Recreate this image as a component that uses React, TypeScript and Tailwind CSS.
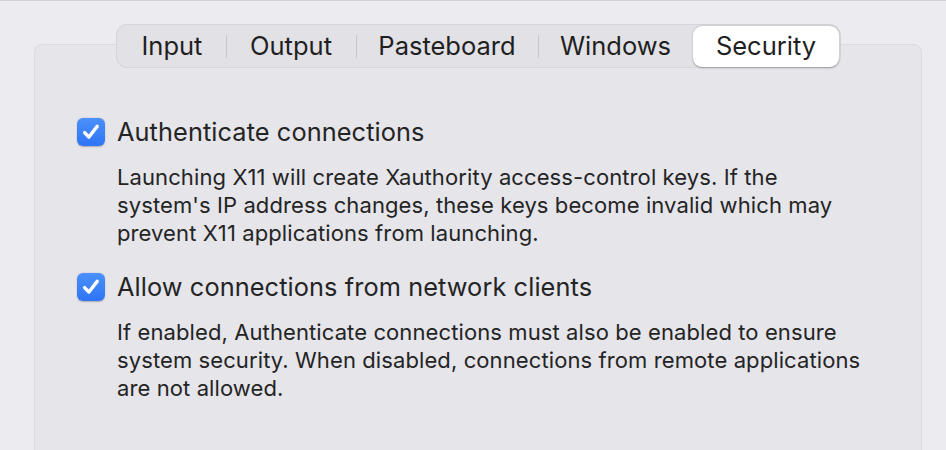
import React from "react";

const tabs = [
  { label: "Input", w: 108 },
  { label: "Output", w: 130 },
  { label: "Pasteboard", w: 182 },
  { label: "Windows", w: 155 },
  { label: "Security", w: 146 },
];

function Check() {
  return (
    <div className="w-[28px] h-[28px] shrink-0 rounded-[6px] bg-gradient-to-b from-[#4b90fa] to-[#2e74f4] shadow-[0_0.5px_1.5px_rgba(0,0,0,0.25)] flex items-center justify-center">
      <svg width="20" height="20" viewBox="0 0 20 20" fill="none">
        <path d="M3.6 10.6 L7.9 15 L16.2 4.4" stroke="white" strokeWidth="3.4" strokeLinecap="round" strokeLinejoin="round" />
      </svg>
    </div>
  );
}

function Option({ title, lines, gapTop }: { title: string; lines: string[]; gapTop: string }) {
  return (
    <div className={gapTop}>
      <div className="flex items-center gap-[12px] h-[30px]">
        <Check />
        <span className="text-[25.3px] leading-[30px] text-[#242424] tracking-[0.1px]">{title}</span>
      </div>
      <div className="ml-[40px] mt-[16px] text-[22px] leading-[28px] text-[#242424] tracking-[0.1px]">
        {lines.map((l, i) => (
          <div key={i} className="whitespace-nowrap">{l}</div>
        ))}
      </div>
    </div>
  );
}

export default function App() {
  return (
    <div
      className="relative w-[946px] h-[450px] overflow-hidden bg-[#ececf0] border-t border-[#d2d2d6]"
      style={{ fontFamily: "Inter, 'Noto Sans', sans-serif" }}
    >
      <div className="ml-[34px] mt-[43px] w-[888px] h-[440px] rounded-[8px] bg-[#e5e5ea] border border-[#dcdce0] pl-[42px] pt-[72px]">
        <Option
          title="Authenticate connections"
          gapTop=""
          lines={[
            "Launching X11 will create Xauthority access-control keys. If the",
            "system's IP address changes, these keys become invalid which may",
            "prevent X11 applications from launching.",
          ]}
        />
        <Option
          title="Allow connections from network clients"
          gapTop="mt-[25px]"
          lines={[
            "If enabled, Authenticate connections must also be enabled to ensure",
            "system security. When disabled, connections from remote applications",
            "are not allowed.",
          ]}
        />
      </div>
      <div className="absolute left-[116px] top-[23px] h-[44px] flex items-center rounded-[11px] bg-[#e1e1e6] border border-[#d6d6da] p-[1px]">
        {tabs.map((t, i) => {
          const selected = t.label === "Security";
          const nextSelected = tabs[i + 1]?.label === "Security";
          return (
            <React.Fragment key={t.label}>
              <div
                className={
                  selected
                    ? "h-[41px] flex items-center justify-center rounded-[9px] bg-white shadow-[0_0.5px_2px_rgba(0,0,0,0.3)] text-[25.5px] text-[#1f1f1f]"
                    : "h-[41px] flex items-center justify-center text-[25.5px] text-[#1f1f1f]"
                }
                style={{ width: t.w }}
              >
                {t.label}
              </div>
              {i < tabs.length - 1 && !selected && !nextSelected && (
                <div className="w-[1px] h-[23px] bg-[#c8c8cc] -mx-[0.5px]" />
              )}
            </React.Fragment>
          );
        })}
      </div>
    </div>
  );
}
